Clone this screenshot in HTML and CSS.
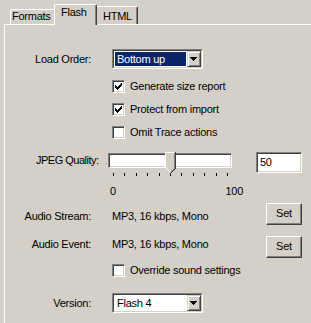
FILE: index.html
```html
<!DOCTYPE html>
<html>
<head>
<meta charset="utf-8">
<link rel="stylesheet" href="styles.css">
</head>
<body>
<div class="tabs">
  <div class="tab tab-formats">Formats</div>
  <div class="tab tab-flash">Flash</div>
  <div class="tab tab-html">HTML</div>
</div>
<div class="panel">
  <div class="row row-load">
    <div class="lbl">Load Order:</div>
    <div class="combo">
      <div class="combo-in">
        <div class="val sel">Bottom up</div>
        <div class="arrow"><svg width="7" height="4" viewBox="0 0 7 4"><path d="M0 0h7v1h-1v1h-1v1h-1v1h-1v-1h-1v-1h-1v-1h-1z" fill="#000"/></svg></div>
      </div>
    </div>
  </div>
  <div class="checks">
    <div class="check"><span class="box"><svg width="7" height="7" viewBox="0 0 7 7"><path d="M6 0h1v3h-1v1h-1v1h-1v1h-1v1h-1v-1h-1v-1h-1v-3h1v1h1v1h1v-1h1v-1h1z" fill="#000"/></svg></span>Generate size report</div>
    <div class="check"><span class="box"><svg width="7" height="7" viewBox="0 0 7 7"><path d="M6 0h1v3h-1v1h-1v1h-1v1h-1v1h-1v-1h-1v-1h-1v-3h1v1h1v1h1v-1h1v-1h1z" fill="#000"/></svg></span>Protect from import</div>
    <div class="check"><span class="box"></span>Omit Trace actions</div>
  </div>
  <div class="row row-jpeg">
    <div class="lbl-jpeg">JPEG Quality:</div>
    <div class="track">
      <svg class="thumb" width="11" height="22" viewBox="0 0 11 22" shape-rendering="crispEdges">
        <path d="M0 0h11v16l-5.5 5.5l-5.5-5.5z" fill="#d4d0c8"/>
        <rect x="0" y="0" width="10" height="1" fill="#fff"/>
        <rect x="0" y="0" width="1" height="16" fill="#fff"/>
        <rect x="10" y="0" width="1" height="16" fill="#404040"/>
        <rect x="9" y="1" width="1" height="15" fill="#808080"/>
        <path d="M1 16h1v1h1v1h1v1h1v1h-1v-1h-1v-1h-1v-1h-1z" fill="#fff"/>
        <path d="M10 16h1v1h-1v1h-1v1h-1v1h-1v1h-1v1h-1v-1h1v-1h1v-1h1v-1h1v-1h1z" fill="#404040"/>
        <path d="M9 16h1v1h-1v1h-1v1h-1v1h-1v-1h1v-1h1v-1h1z" fill="#808080"/>
      </svg>
    </div>
    <div class="edit">50</div>
  </div>
  <div class="ticks">
    <i></i><i></i><i></i><i></i><i></i><i></i><i></i><i></i><i></i><i></i><i></i>
  </div>
  <div class="nums"><span>0</span><span>100</span></div>
  <div class="row row-audio row-stream">
    <div class="lbl">Audio Stream:</div>
    <div class="aval">MP3, 16 kbps, Mono</div>
    <div class="btn">Set</div>
  </div>
  <div class="row row-audio row-event">
    <div class="lbl">Audio Event:</div>
    <div class="aval">MP3, 16 kbps, Mono</div>
    <div class="btn">Set</div>
  </div>
  <div class="checks checks-override">
    <div class="check"><span class="box"></span>Override sound settings</div>
  </div>
  <div class="row row-version">
    <div class="lbl">Version:</div>
    <div class="combo">
      <div class="combo-in">
        <div class="val">Flash 4</div>
        <div class="arrow"><svg width="7" height="4" viewBox="0 0 7 4"><path d="M0 0h7v1h-1v1h-1v1h-1v1h-1v-1h-1v-1h-1v-1h-1z" fill="#000"/></svg></div>
      </div>
    </div>
  </div>
</div>
</body>
</html>
```
FILE: styles.css
```css
* { box-sizing: border-box; margin: 0; padding: 0; }
html, body { background: #d4d0c8; }
body {
  margin: 0;
  width: 311px;
  height: 323px;
  overflow: hidden;
  font-family: "Liberation Sans", Arial, sans-serif;
  font-size: 11px;
  line-height: 13px;
  letter-spacing: -0.25px;
  color: #000;
}
.tabs {
  display: flex;
  align-items: flex-end;
  height: 24px;
  padding-left: 10px;
  position: relative;
  z-index: 1;
}
.tab {
  background: #d4d0c8;
  border-top: 1px solid #fff;
  white-space: nowrap;
}
.tab-formats {
  width: 44px;
  height: 15px;
  border-left: 1px solid #fff;
  border-top-left-radius: 2px;
  padding-left: 1px;
}
.tab-flash {
  width: 43px;
  height: 21px;
  margin-bottom: -1px;
  border-left: 1px solid #fff;
  border-right: 1px solid #404040;
  border-top-left-radius: 2px;
  border-top-right-radius: 2px;
  box-shadow: inset -1px 0 #808080;
  padding: 1px 0 0 6px;
}
.tab-html {
  width: 41px;
  height: 18px;
  border-right: 1px solid #404040;
  border-top-right-radius: 2px;
  box-shadow: inset -1px 0 #808080;
  padding: 3px 0 0 6px;
}
.panel {
  margin-left: 4px;
  height: 299px;
  border-left: 1px solid #fff;
  border-top: 1px solid #fff;
}
.row {
  display: flex;
  align-items: center;
}
.lbl {
  width: 86px;
  margin-right: 21px;
  text-align: right;
  flex: none;
  white-space: nowrap;
}
.row-load { margin-top: 24px; }

.combo {
  width: 91px;
  height: 20px;
  border: 1px solid;
  border-color: #808080 #fff #fff #808080;
  background: #fff;
}
.combo-in {
  height: 100%;
  display: flex;
  border: 1px solid;
  border-color: #404040 #d4d0c8 #d4d0c8 #404040;
}
.val {
  flex: 1;
  margin: 1px;
  padding-left: 2px;
  line-height: 14px;
  white-space: nowrap;
}
.val.sel {
  background: #0a246a;
  color: #fff;
}
.arrow {
  width: 14px;
  height: 16px;
  background: #d4d0c8;
  border: 1px solid;
  border-color: #d4d0c8 #404040 #404040 #d4d0c8;
  box-shadow: inset 1px 1px #fff, inset -1px -1px #808080;
  display: flex;
  align-items: center;
  justify-content: center;
}
.arrow svg { display: block; margin-left: -1px; }

.checks {
  margin-top: 11px;
  margin-left: 107px;
  display: flex;
  flex-direction: column;
  gap: 10px;
}
.check {
  display: flex;
  align-items: center;
  height: 13px;
  white-space: nowrap;
}
.box {
  width: 13px;
  height: 13px;
  flex: none;
  margin-right: 5px;
  background: #fff;
  border: 1px solid;
  border-color: #808080 #fff #fff #808080;
  box-shadow: inset 1px 1px #404040, inset -1px -1px #d4d0c8;
  position: relative;
}
.box svg {
  position: absolute;
  left: 2px;
  top: 2px;
  display: block;
}

.row-jpeg {
  margin-top: 13px;
  align-items: flex-start;
  height: 21px;
}
.lbl-jpeg {
  width: 103px;
  padding-left: 31px;
  margin-top: 2px;
  letter-spacing: -0.5px;
  white-space: nowrap;
  flex: none;
}
.track {
  width: 124px;
  height: 15px;
  margin-top: 1px;
  background: #fff;
  border: 1px solid;
  border-color: #808080 #fff #fff #808080;
  box-shadow: inset 1px 1px #404040, inset -1px -1px #d4d0c8;
  position: relative;
  flex: none;
}
.thumb {
  position: absolute;
  left: 56px;
  top: -2px;
  display: block;
}
.edit {
  width: 46px;
  height: 21px;
  margin-left: 24px;
  background: #fff;
  border: 1px solid;
  border-color: #808080 #fff #fff #808080;
  box-shadow: inset 1px 1px #404040, inset -1px -1px #d4d0c8;
  padding: 3px 0 0 3px;
}
.ticks {
  margin-left: 108px;
  width: 115px;
  height: 3px;
  display: flex;
  justify-content: space-between;
}
.ticks i {
  display: block;
  width: 1px;
  height: 3px;
  background: #000;
}
.nums {
  margin-top: 9px;
  margin-left: 105px;
  width: 133px;
  display: flex;
  justify-content: space-between;
}

.row-audio {
  align-items: flex-start;
  height: 22px;
}
.row-stream { margin-top: 5px; }
.row-event { margin-top: 11px; }
.row-stream .lbl, .row-stream .aval { padding-top: 7px; }
.row-event .lbl, .row-event .aval { padding-top: 2px; }
.aval {
  width: 154px;
  white-space: nowrap;
  flex: none;
}
.btn {
  width: 36px;
  height: 22px;
  flex: none;
  background: #d4d0c8;
  border: 1px solid;
  border-color: #fff #404040 #404040 #fff;
  box-shadow: inset -1px -1px #808080;
  display: flex;
  align-items: center;
  justify-content: center;
  padding-bottom: 1px;
}
.checks-override { margin-top: 6px; }
.row-version { margin-top: 16px; }
```
